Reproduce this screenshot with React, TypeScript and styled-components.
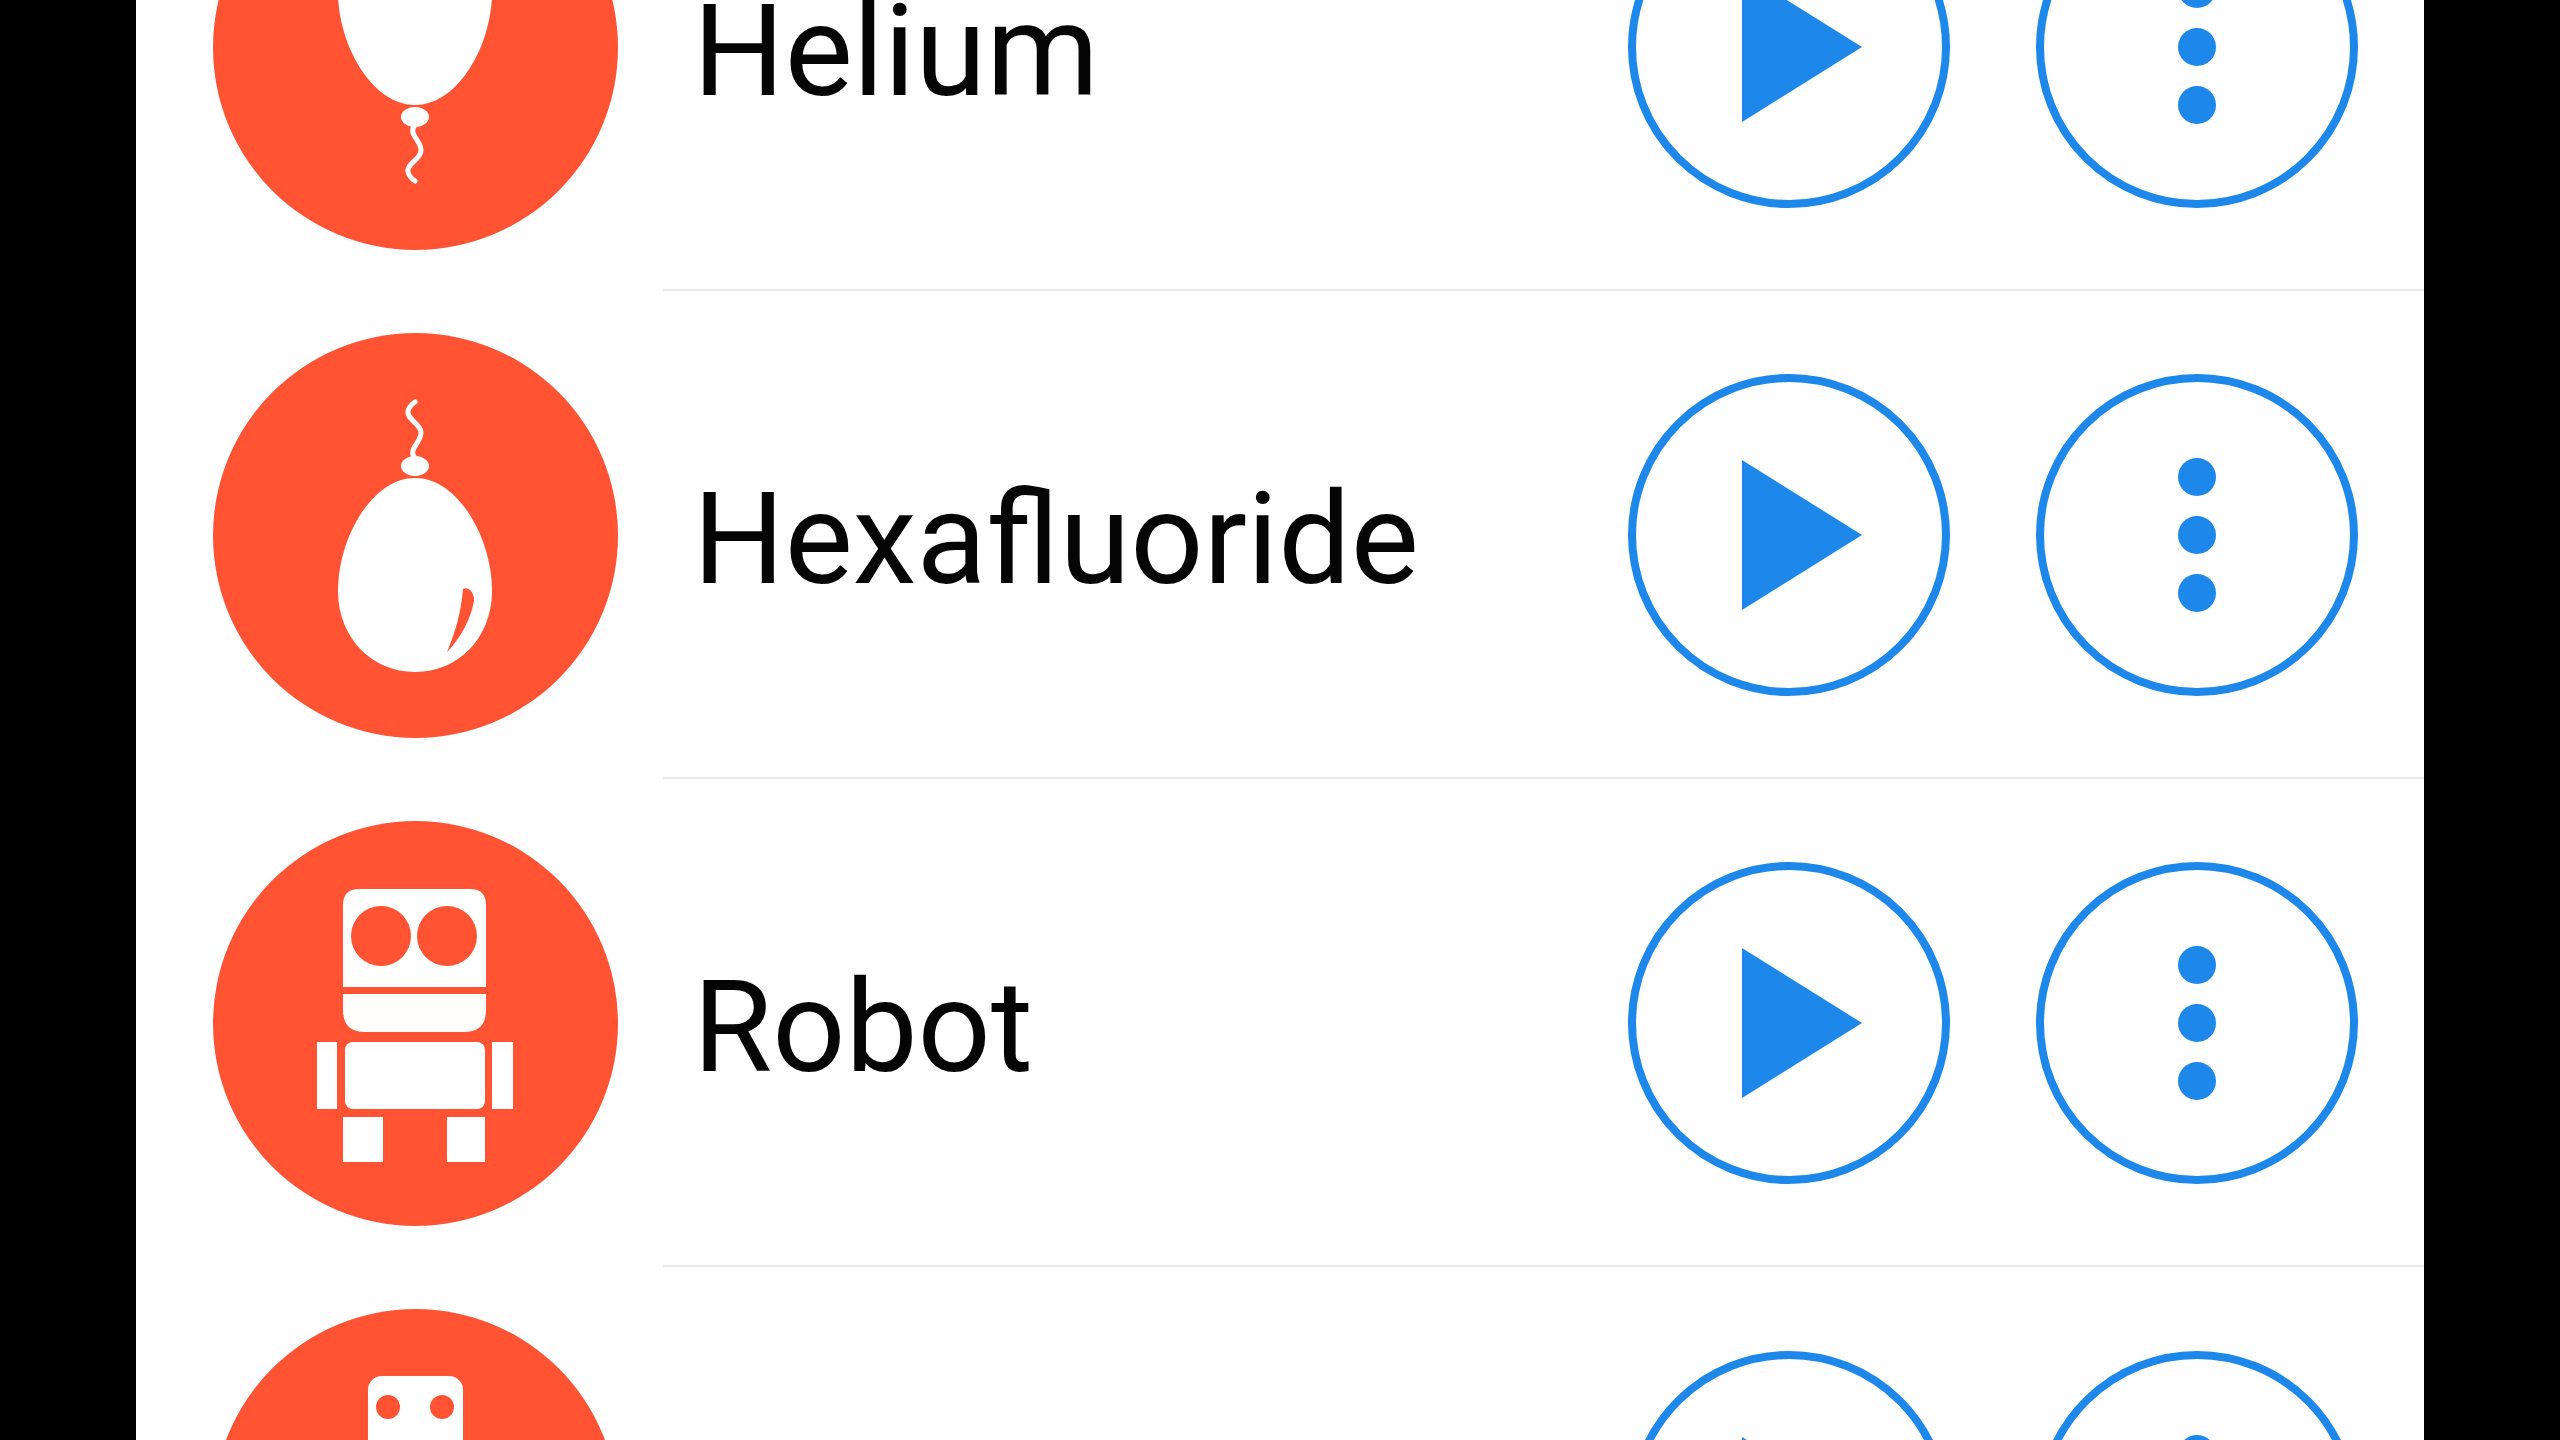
import React from "react";
import styled, { createGlobalStyle } from "styled-components";

const GlobalStyle = createGlobalStyle`
  html, body { margin: 0; padding: 0; background: #000; }
  #root { width: 100%; }
`;

const ORANGE = "#ff5333";
const BLUE = "#1e88ea";

const Screen = styled.main`
  height: 1440px;
  overflow: hidden;
  display: flex;
  justify-content: center;
  background: #000;
`;

const Panel = styled.div`
  width: 2288px;
  height: 1440px;
  overflow: hidden;
  background: #fefefe;
`;

const List = styled.ul`
  list-style: none;
  margin: -197px 0 0;
  padding: 0;
`;

const Row = styled.li`
  height: 488px;
  display: flex;
  align-items: stretch;
  padding-left: 77px;
`;

const Avatar = styled.svg`
  flex: none;
  width: 405px;
  height: 405px;
  align-self: center;
  margin-right: 45px;
`;

const Body = styled.div<{ $divider: boolean }>`
  flex: 1;
  min-width: 0;
  display: flex;
  align-items: center;
  padding: 2px 66px 0 30px;
  box-sizing: border-box;
  border-bottom: ${(p) => (p.$divider ? "2px solid #ececec" : "none")};
`;

const Name = styled.span`
  flex: 1;
  font-family: Roboto, "Liberation Sans", sans-serif;
  font-size: 128.5px;
  font-weight: 400;
  line-height: 1;
  color: #050505;
  padding-top: 8px;
`;

const Actions = styled.div`
  flex: none;
  display: flex;
  gap: 86px;
`;

const RoundButton = styled.button`
  width: 322px;
  height: 322px;
  padding: 0;
  box-sizing: border-box;
  border: 8px solid ${BLUE};
  border-radius: 50%;
  background: transparent;
  display: flex;
  align-items: center;
  justify-content: center;
`;

const Glyph = styled.svg`
  width: 306px;
  height: 306px;
  display: block;
`;

const PlayIcon = () => (
  <Glyph viewBox="0 0 306 306">
    <path d="M106 78 L226 153 L106 228 Z" fill={BLUE} />
  </Glyph>
);

const MoreIcon = () => (
  <Glyph viewBox="0 0 306 306">
    <circle cx="153" cy="95" r="19" fill={BLUE} />
    <circle cx="153" cy="153" r="19" fill={BLUE} />
    <circle cx="153" cy="211" r="19" fill={BLUE} />
  </Glyph>
);

const Disc = () => <circle cx="202.5" cy="202.5" r="202.5" fill={ORANGE} />;

const Balloon = ({ flip }: { flip?: boolean }) => (
  <Avatar viewBox="0 0 405 405">
    <Disc />
    <g transform={flip ? "translate(0 405) scale(1 -1)" : undefined}>
      <path
        d="M202 145 C245 145 279 205 279 258 C279 305 245 339 202 339 C159 339 125 305 125 258 C125 205 159 145 202 145 Z"
        fill="#fff"
      />
      <ellipse cx="202" cy="133" rx="14" ry="10" fill="#fff" />
      <path
        d="M202 125 C194 116 209 109 208 99 C207 90 193 86 195 78 C196 74 199 71 202 69"
        fill="none"
        stroke="#fff"
        strokeWidth="5"
        strokeLinecap="round"
      />
      <path d="M250 256 C255 253 262 260 261 268 C258 285 248 305 234 319 C242 300 248 280 250 256 Z" fill={ORANGE} />
    </g>
  </Avatar>
);

const RobotBig = () => (
  <Avatar viewBox="0 0 405 405">
    <Disc />
    <path d="M130 166 V84 Q130 68 146 68 H257 Q273 68 273 84 V166 Z" fill="#fff" />
    <path d="M130 173 H273 V189 Q273 211 251 211 H152 Q130 211 130 189 Z" fill="#fffefa" />
    <circle cx="168" cy="115" r="30" fill={ORANGE} />
    <circle cx="234" cy="115" r="30" fill={ORANGE} />
    <rect x="132" y="221" width="140" height="67" rx="8" fill="#fff" />
    <rect x="104" y="221" width="20" height="67" fill="#fff" />
    <rect x="279" y="221" width="21" height="67" fill="#fff" />
    <rect x="130" y="296" width="40" height="45" fill="#fff" />
    <rect x="234" y="296" width="38" height="45" fill="#fff" />
  </Avatar>
);

const RobotSmall = () => (
  <Avatar viewBox="0 0 405 405">
    <Disc />
    <rect x="155" y="67" width="95" height="120" rx="14" fill="#fff" />
    <circle cx="175" cy="98" r="12" fill={ORANGE} />
    <circle cx="229" cy="98" r="12" fill={ORANGE} />
  </Avatar>
);

const rows: { name: string; icon: React.ReactNode }[] = [
  { name: "Helium", icon: <Balloon flip /> },
  { name: "Hexafluoride", icon: <Balloon /> },
  { name: "Robot", icon: <RobotBig /> },
  { name: "Robot 2", icon: <RobotSmall /> },
];

export default function App() {
  return (
    <>
      <GlobalStyle />
      <Screen>
        <Panel>
          <List>
            {rows.map((r, i) => (
              <Row key={r.name}>
                {r.icon}
                <Body $divider={i < rows.length - 1}>
                  <Name>{r.name}</Name>
                  <Actions>
                    <RoundButton aria-label="Play">
                      <PlayIcon />
                    </RoundButton>
                    <RoundButton aria-label="More">
                      <MoreIcon />
                    </RoundButton>
                  </Actions>
                </Body>
              </Row>
            ))}
          </List>
        </Panel>
      </Screen>
    </>
  );
}
